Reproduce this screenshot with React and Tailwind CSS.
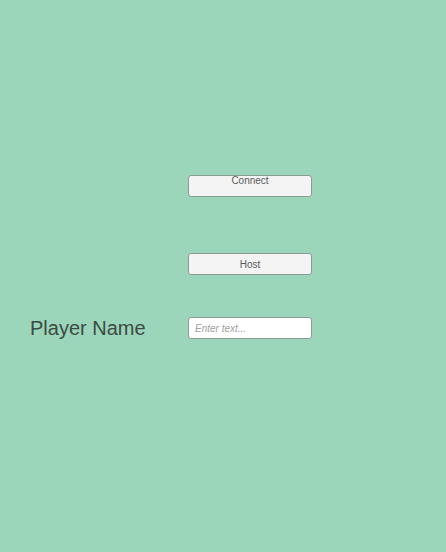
export default function App() {
  const font = { fontFamily: '"Liberation Sans", Arial, sans-serif' };
  return (
    <div className="w-[446px] h-[552px] bg-[#9bd5ba] flex flex-col pt-[175px]" style={font}>
      <div className="ml-[188px] w-[124px] h-[22px] bg-[#f4f4f4] border border-[#8e9a94] rounded-[3px] flex justify-center items-start pt-[0px] text-[10px] leading-[10px] text-[#5a5a5a]">
        Connect
      </div>
      <div className="ml-[188px] mt-[56px] w-[124px] h-[22px] bg-[#f4f4f4] border border-[#8e9a94] rounded-[3px] flex justify-center items-center text-[10px] text-[#5a5a5a]">
        Host
      </div>
      <div className="mt-[42px] flex items-center h-[22px]">
        <div className="w-[188px] pl-[30px] text-[20px] text-[#3c4a43] leading-none">Player Name</div>
        <div className="w-[124px] h-[22px] bg-white border border-[#8e9a94] rounded-[3px] flex items-center pl-[6px] text-[10px] italic text-[#a0a0a0]">
          Enter text...
        </div>
      </div>
    </div>
  );
}
